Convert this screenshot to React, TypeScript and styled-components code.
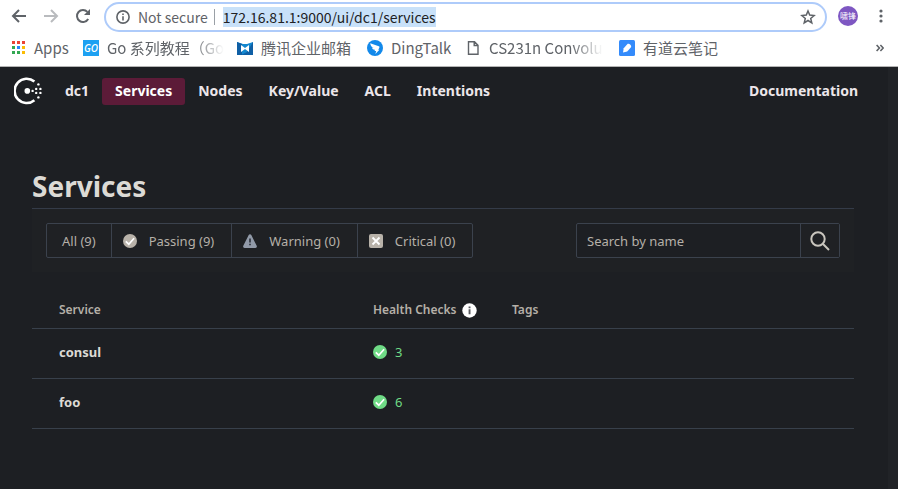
import React from "react";
import styled, { createGlobalStyle } from "styled-components";

const GlobalStyle = createGlobalStyle`
  *, *::before, *::after { box-sizing: border-box; }
  body { margin: 0; background: #1d1f23; }
  button, input { font: inherit; color: inherit; }
  svg { display: block; flex: none; }
`;

const chromeFont = `"Noto Sans CJK SC", "Noto Sans", sans-serif`;
const appFont = `"Noto Sans", "Open Sans", sans-serif`;

const Window = styled.div`
  display: flex;
  flex-direction: column;
  min-height: 100vh;
`;

/* Browser chrome */

const BrowserChrome = styled.header`
  background: #fff;
  color: #5f6368;
  font-family: ${chromeFont};
  border-bottom: 1px solid #b4b4b4;
`;

const Toolbar = styled.div`
  display: flex;
  align-items: center;
  height: 33px;
  padding: 0 8px 0 10px;
`;

const ToolButton = styled.button<{ $dim?: boolean }>`
  display: grid;
  place-items: center;
  flex: none;
  width: 18px;
  height: 24px;
  padding: 0;
  border: 0;
  background: none;
  color: ${(p) => (p.$dim ? "#b9bbbe" : "#5f6368")};
`;

const NavButtons = styled.div`
  display: flex;
  gap: 14px;
  margin-right: 12px;
  padding-bottom: 2px;
`;

const AddressBar = styled.div`
  display: flex;
  align-items: center;
  flex: 1;
  height: 30px;
  padding: 0 8px 0 10px;
  border: 2px solid #aecbfa;
  border-radius: 15px;
  font-size: 14px;
  line-height: 20px;
`;

const SecurityLabel = styled.span`
  margin-left: 8px;
  padding-right: 6px;
  white-space: nowrap;
`;

const Divider = styled.span`
  width: 1px;
  height: 16px;
  margin-right: 8px;
  background: #9aa0a6;
`;

const Url = styled.div`
  flex: 1;
  color: #202124;

  mark {
    background: #c8e1f9;
    color: inherit;
  }
`;

const Profile = styled.div`
  display: flex;
  align-items: center;
  gap: 14px;
  margin-left: 11px;
  padding-bottom: 2px;
`;

const Avatar = styled.button`
  display: grid;
  place-items: center;
  flex: none;
  width: 20px;
  height: 20px;
  padding: 0;
  border: 0;
  border-radius: 50%;
  background: #7e57c2;
  color: #fff;
  font-size: 8px;
  line-height: 12px;
  white-space: nowrap;
`;

const Bookmarks = styled.nav`
  display: flex;
  align-items: center;
  height: 33px;
  padding: 0 14px 3px 11px;
  font-size: 15px;
  line-height: 22px;
`;

const Bookmark = styled.a<{ $width: number; $fade?: boolean }>`
  display: flex;
  align-items: center;
  gap: 8px;
  flex: none;
  width: ${(p) => p.$width}px;
  color: inherit;
  text-decoration: none;

  span {
    flex: none;
    white-space: nowrap;
    mask-image: ${(p) =>
      p.$fade ? "linear-gradient(to left, transparent, #000 32px)" : "none"};
  }
`;

const More = styled.button`
  margin-left: auto;
  padding: 0;
  border: 0;
  background: none;
`;

/* Application */

const Viewport = styled.div`
  display: flex;
  flex: 1;
  background: #1d1f23;
  color: #dcdad5;
  font-family: ${appFont};
`;

const Page = styled.div`
  flex: 1;
  min-width: 0;
`;

const ScrollTrack = styled.div`
  flex: none;
  width: 10px;
  background: #212327;
`;

const AppNav = styled.nav`
  display: flex;
  align-items: center;
  padding: 10px 17px 0 14px;
  font-size: 14px;
  font-weight: 700;
  line-height: 19px;
`;

const Home = styled.a`
  margin-right: 10px;
  color: #fff;
`;

const NavLink = styled.a<{ $active?: boolean; $end?: boolean }>`
  padding: 3px 13px 5px;
  border-radius: 3px;
  background: ${(p) => (p.$active ? "#5c1b38" : "transparent")};
  color: ${(p) => (p.$active ? "#fff" : "#ece6ea")};
  text-decoration: none;
  margin-left: ${(p) => (p.$end ? "auto" : 0)};
`;

const Main = styled.main`
  padding: 62px 34px 0 32px;
`;

const Title = styled.h1`
  margin: 0;
  padding-bottom: 3px;
  border-bottom: 1px solid #343b48;
  font-size: 28px;
  font-weight: 700;
  line-height: 38px;
`;

const FilterBar = styled.form`
  display: flex;
  justify-content: space-between;
  padding: 14px;
  background: #1f2124;
  color: #b5b0a8;
  font-size: 13px;
  line-height: 18px;
`;

const FilterGroup = styled.div`
  display: flex;
  border: 1px solid #3b424d;
  border-radius: 2px;
`;

const Filter = styled.button<{ $bare?: boolean }>`
  display: flex;
  align-items: center;
  gap: 12px;
  height: 33px;
  padding: ${(p) => (p.$bare ? "0 15px" : "0 17px 0 11px")};
  border: 0;
  background: none;
  white-space: nowrap;

  & + & {
    border-left: 1px solid #3b424d;
  }
`;

const SearchBox = styled.div`
  display: flex;
  width: 264px;
  height: 35px;
  border: 1px solid #3b424d;
  border-radius: 2px;
  background: #1d1f23;
`;

const SearchInput = styled.input`
  flex: 1;
  min-width: 0;
  padding: 0 10px;
  border: 0;
  outline: 0;
  background: none;

  &::placeholder {
    color: #b5b0a8;
    opacity: 1;
  }
`;

const SearchButton = styled.button`
  display: grid;
  place-items: center;
  width: 39px;
  padding: 0;
  border: 0;
  border-left: 1px solid #3b424d;
  background: #1f2124;
  color: #c9c6be;
`;

const Table = styled.table`
  width: 100%;
  margin-top: 19px;
  border-collapse: collapse;
  table-layout: fixed;
  text-align: left;
  line-height: 18px;
`;

const HeadCell = styled.th<{ $width?: string }>`
  width: ${(p) => p.$width ?? "auto"};
  height: 37px;
  padding: 2px 0 0;
  border-bottom: 1px solid #38404b;
  color: #b5b0a8;
  font-size: 12px;
  font-weight: 600;

  &:first-child {
    padding-left: 27px;
  }
`;

const Cell = styled.td`
  height: 50px;
  padding: 0 0 2px;
  border-bottom: 1px solid #38404b;
  font-size: 13px;

  &:first-child {
    padding-left: 27px;
  }
`;

const ServiceLink = styled.a`
  color: #dcdad5;
  font-weight: 700;
  text-decoration: none;
`;

const Inline = styled.span<{ $gap: number; $color?: string }>`
  display: flex;
  align-items: center;
  gap: ${(p) => p.$gap}px;
  color: ${(p) => p.$color ?? "inherit"};
`;

/* Icons */

const ArrowIcon = ({ flip }: { flip?: boolean }) => (
  <svg width="16" height="16" viewBox="0 0 16 16" fill="none" stroke="currentColor" strokeWidth="2">
    <path d={flip ? "M1 8h13M8 2l6 6-6 6" : "M15 8H2M8 2L2 8l6 6"} />
  </svg>
);

const ReloadIcon = () => (
  <svg width="16" height="16" viewBox="0 0 16 16" fill="none">
    <path d="M13.2 11A6 6 0 1 1 12.4 3.9" stroke="currentColor" strokeWidth="2" />
    <path d="M15 1v6H9z" fill="currentColor" />
  </svg>
);

const SiteInfoIcon = () => (
  <svg width="14" height="14" viewBox="0 0 14 14" fill="none">
    <circle cx="7" cy="7" r="6.1" stroke="currentColor" strokeWidth="1.6" />
    <path d="M6.2 6.2h1.6v4.3H6.2zM6.2 3.4h1.6V5H6.2z" fill="currentColor" />
  </svg>
);

const StarIcon = () => (
  <svg width="16" height="16" viewBox="0 0 16 16" fill="none" stroke="currentColor" strokeWidth="1.5">
    <path d="M8 2l1.7 4.1 4.4.4-3.4 2.9 1.1 4.4L8 11.5l-3.8 2.3 1.1-4.4L1.9 6.5l4.4-.4z" />
  </svg>
);

const KebabIcon = () => (
  <svg width="4" height="14" viewBox="0 0 4 14" fill="currentColor">
    <circle cx="2" cy="2" r="1.6" />
    <circle cx="2" cy="7" r="1.6" />
    <circle cx="2" cy="12" r="1.6" />
  </svg>
);

const MoreIcon = () => (
  <svg width="8" height="8" viewBox="0 0 8 8" fill="none" stroke="currentColor" strokeWidth="1.6">
    <path d="M.6 1l2.800 3-2.800 3M4.400 1l2.800 3-2.800 3" />
  </svg>
);

const appColors = [
  "#ea4335", "#ea4335", "#ea4335",
  "#34a853", "#2684fc", "#fbbc04",
  "#34a853", "#34a853", "#fbbc04",
];

const AppsIcon = () => (
  <svg width="15" height="14" viewBox="0 0 15 14">
    {appColors.map((color, i) => (
      <rect key={i} x={1 + (i % 3) * 5} y={Math.floor(i / 3) * 5} width="3" height="3" fill={color} />
    ))}
  </svg>
);

const GoTile = styled.b`
  display: grid;
  place-items: center;
  flex: none;
  width: 16px;
  height: 16px;
  background: #1da1f2;
  color: #fff;
  font: italic 600 10px/16px "Open Sans", sans-serif;
`;

const MailIcon = () => (
  <svg width="16" height="16" viewBox="0 0 16 16">
    <path d="M0 2l6 2h4l6-2v13H0z" fill="#1488cf" />
    <path d="M0 2l5 2v11H0zM10 12l6-10v13H4z" fill="#0f5fa5" />
    <path d="M4 5l4 3 4-3v7l-4-3-4 3z" fill="#fff" />
  </svg>
);

const DingTalkIcon = () => (
  <svg width="16" height="16" viewBox="0 0 16 16">
    <circle cx="8" cy="8" r="8" fill="#1389ea" />
    <path d="M3.2 3.2l8.6 3c.9.4.7 1.2.3 2l-.9 1.6h1.2L8.4 14l.8-3H7.6l.4-1.3c-1.6.2-2.6-.8-3-2l1.6.1C4.6 7 3.6 5.7 3.2 3.2z" fill="#fff" />
  </svg>
);

const FileIcon = () => (
  <svg width="16" height="16" viewBox="0 0 16 16" fill="none" stroke="currentColor" strokeWidth="1.4">
    <path d="M3.5 1.7h6l3.5 3.5v9.1H3.5zM9.2 1.7v3.8H13" />
  </svg>
);

const NoteIcon = () => (
  <svg width="16" height="16" viewBox="0 0 16 16">
    <rect width="16" height="16" rx="1.5" fill="#348bfb" />
    <path d="M4 12.4l.7-4.2 4-4.4c1.400-.6 3.800.8 3.500 3.200l-4 4.400z" fill="#fff" />
  </svg>
);

const ConsulLogo = () => (
  <svg width="28" height="28" viewBox="0 0 28 28" fill="currentColor" role="img" aria-label="Consul">
    <path
      d="M20.4 23.2A12.1 12.1 0 1 1 20.4 4.6"
      fill="none"
      stroke="currentColor"
      strokeWidth="2.6"
    />
    <circle cx="13.3" cy="13.9" r="2.8" />
    {[
      [18.6, 13.9], [22.2, 11.9], [22.2, 15.9],
      [26.4, 11.9], [26.4, 15.9], [24.4, 7.4], [24.4, 20.4],
    ].map(([x, y]) => (
      <circle key={`${x}-${y}`} cx={x} cy={y} r="1.2" />
    ))}
  </svg>
);

const CheckIcon = ({ color }: { color: string }) => (
  <svg width="14" height="14" viewBox="0 0 14 14">
    <circle cx="7" cy="7" r="7" fill={color} />
    <path d="M2.800 7.400l3 2.800 5.300-6" fill="none" stroke="#fff" strokeWidth="1.700" />
  </svg>
);

const WarningIcon = () => (
  <svg width="14" height="14" viewBox="0 0 14 14">
    <path d="M5.7 1c.6-1 2-1 2.6 0l5.400 10.800c.5 1-.1 2.200-1.300 2.200H1.600C.4 14-.2 12.800.3 11.800z" fill="#919aa8" />
    <path d="M6.200 4.500h1.600v4H6.200zM6.200 9.700h1.600v1.600H6.200z" fill="#2a2f37" />
  </svg>
);

const CriticalIcon = () => (
  <svg width="14" height="14" viewBox="0 0 14 14">
    <rect width="14" height="14" rx="2" fill="#b8b2a9" />
    <path d="M3.500 3.500l7 7M10.500 3.500l-7 7" stroke="#fff" strokeWidth="1.800" />
  </svg>
);

const SearchIcon = () => (
  <svg width="20" height="20" viewBox="0 0 20 20" fill="none" stroke="currentColor" strokeWidth="2">
    <circle cx="8" cy="8" r="6.700" />
    <path d="M13 13l6 6" />
  </svg>
);

const InfoIcon = () => (
  <svg width="15" height="15" viewBox="0 0 15 15">
    <circle cx="7.500" cy="7.500" r="7.200" fill="#fff" />
    <path d="M6.600 6.300h1.900v5H6.600zM6.600 3.500h1.900v1.800H6.600z" fill="#55575c" />
  </svg>
);

const services = [
  { name: "consul", passing: 3 },
  { name: "foo", passing: 6 },
];

export default function App() {
  return (
    <Window>
      <GlobalStyle />
      <BrowserChrome>
        <Toolbar>
          <NavButtons>
            <ToolButton aria-label="Back"><ArrowIcon /></ToolButton>
            <ToolButton aria-label="Forward" $dim><ArrowIcon flip /></ToolButton>
            <ToolButton aria-label="Reload"><ReloadIcon /></ToolButton>
          </NavButtons>
          <AddressBar>
            <SiteInfoIcon />
            <SecurityLabel>Not secure</SecurityLabel>
            <Divider />
            <Url><mark>172.16.81.1:9000/ui/dc1/services</mark></Url>
            <ToolButton aria-label="Bookmark this page"><StarIcon /></ToolButton>
          </AddressBar>
          <Profile>
            <Avatar>啸锋</Avatar>
            <ToolButton aria-label="Menu"><KebabIcon /></ToolButton>
          </Profile>
        </Toolbar>
        <Bookmarks aria-label="Bookmarks">
          <Bookmark href="#" $width={72}><AppsIcon /><span>Apps</span></Bookmark>
          <Bookmark href="#" $width={154} $fade><GoTile>GO</GoTile><span>Go 系列教程（Go</span></Bookmark>
          <Bookmark href="#" $width={130}><MailIcon /><span>腾讯企业邮箱</span></Bookmark>
          <Bookmark href="#" $width={98}><DingTalkIcon /><span>DingTalk</span></Bookmark>
          <Bookmark href="#" $width={154} $fade><FileIcon /><span>CS231n Convolu</span></Bookmark>
          <Bookmark href="#" $width={120}><NoteIcon /><span>有道云笔记</span></Bookmark>
          <More aria-label="More bookmarks"><MoreIcon /></More>
        </Bookmarks>
      </BrowserChrome>
      <Viewport>
        <Page>
          <AppNav aria-label="Main">
            <Home href="#"><ConsulLogo /></Home>
            <NavLink href="#">dc1</NavLink>
            <NavLink href="#" $active>Services</NavLink>
            <NavLink href="#">Nodes</NavLink>
            <NavLink href="#">Key/Value</NavLink>
            <NavLink href="#">ACL</NavLink>
            <NavLink href="#">Intentions</NavLink>
            <NavLink href="#" $end>Documentation</NavLink>
          </AppNav>
          <Main>
            <Title>Services</Title>
            <FilterBar onSubmit={(e) => e.preventDefault()}>
              <FilterGroup>
                <Filter type="button" $bare>All (9)</Filter>
                <Filter type="button"><CheckIcon color="#b8b2a9" />Passing (9)</Filter>
                <Filter type="button"><WarningIcon />Warning (0)</Filter>
                <Filter type="button"><CriticalIcon />Critical (0)</Filter>
              </FilterGroup>
              <SearchBox>
                <SearchInput type="text" aria-label="Search by name" placeholder="Search by name" />
                <SearchButton aria-label="Search"><SearchIcon /></SearchButton>
              </SearchBox>
            </FilterBar>
            <Table>
              <thead>
                <tr>
                  <HeadCell $width="341px">Service</HeadCell>
                  <HeadCell $width="139px"><Inline $gap={5}>Health Checks<InfoIcon /></Inline></HeadCell>
                  <HeadCell>Tags</HeadCell>
                </tr>
              </thead>
              <tbody>
                {services.map((s) => (
                  <tr key={s.name}>
                    <Cell><ServiceLink href="#">{s.name}</ServiceLink></Cell>
                    <Cell>
                      <Inline $gap={8} $color="#6fdb86"><CheckIcon color="#6fdb86" />{s.passing}</Inline>
                    </Cell>
                    <Cell />
                  </tr>
                ))}
              </tbody>
            </Table>
          </Main>
        </Page>
        <ScrollTrack />
      </Viewport>
    </Window>
  );
}
